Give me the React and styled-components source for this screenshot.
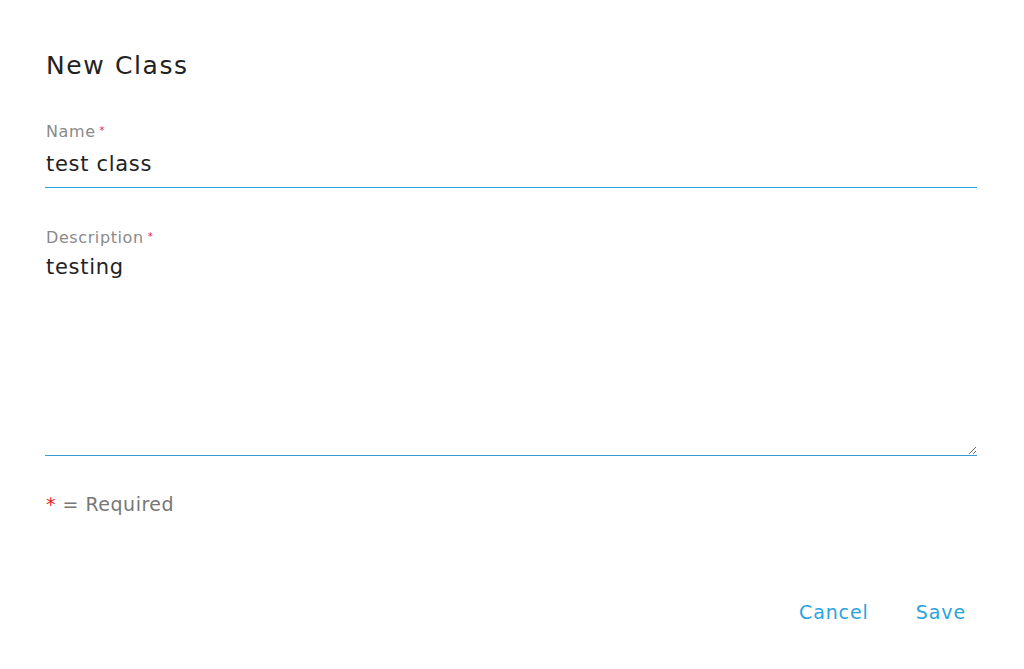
import React from 'react'
import styled, { createGlobalStyle } from 'styled-components'

const Global = createGlobalStyle`
  html, body {
    margin: 0;
    padding: 0;
    background: #ffffff;
  }
  body {
    font-family: "DejaVu Sans", "Noto Sans", sans-serif;
    color: #222222;
  }
`

const Dialog = styled.div`
  width: 1024px;
  height: 669px;
  box-sizing: border-box;
  padding: 50px 47px 0 45px;
  display: flex;
  flex-direction: column;
`

const Title = styled.h2`
  margin: 0 0 0 1px;
  font-size: 25px;
  line-height: 32px;
  font-weight: normal;
  letter-spacing: 1.6px;
  color: #222222;
`

const Field = styled.div`
  display: flex;
  flex-direction: column;
  margin-top: ${p => p.$top}px;
`

const Label = styled.label`
  font-size: 16px;
  line-height: 18px;
  color: #8a8a8a;
  padding-left: 1px;
  letter-spacing: 0.6px;
`

const Star = styled.span`
  color: #e8272b;
  font-size: 10px;
  vertical-align: 3px;
  margin-left: 4px;
`

const Line = styled.div`
  border-bottom: 1px solid ${p => (p.$focused ? '#1ea7e4' : '#3a9ad2')};
  display: flex;
  flex-direction: column;
`

const Input = styled.input`
  border: 0;
  outline: none;
  padding: 10px 0 10px 1px;
  margin: 0;
  font-family: "DejaVu Sans", sans-serif;
  font-size: 21px;
  line-height: 26px;
  color: #222222;
  letter-spacing: 0.7px;
  background: transparent;
`

const TextArea = styled.textarea`
  border: 0;
  outline: none;
  margin: 0;
  padding: 7px 0 0 1px;
  height: 208px;
  box-sizing: border-box;
  font-family: "DejaVu Sans", sans-serif;
  font-size: 21px;
  line-height: 26px;
  color: #222222;
  letter-spacing: 0.7px;
  resize: vertical;
  background: transparent;
`

const Note = styled.div`
  margin-top: 36px;
  font-size: 19px;
  line-height: 24px;
  color: #777777;
  padding-left: 1px;
  letter-spacing: 0.5px;

  span {
    color: #e8272b;
  }
`

const Actions = styled.div`
  margin-top: 84px;
  display: flex;
  justify-content: flex-end;
  gap: 47px;
  padding-right: 11px;
`

const TextButton = styled.button`
  border: none;
  background: none;
  padding: 0;
  font-family: "DejaVu Sans", sans-serif;
  font-size: 19px;
  line-height: 24px;
  letter-spacing: 0.9px;
  color: #2ba3de;
  cursor: pointer;
`

export default function App() {
  return (
    <>
      <Global />
      <Dialog>
        <Title>New Class</Title>
        <Field $top={40}>
          <Label>
            Name<Star>*</Star>
          </Label>
          <Line $focused>
            <Input defaultValue="test class" />
          </Line>
        </Field>
        <Field $top={40}>
          <Label>
            Description<Star>*</Star>
          </Label>
          <Line>
            <TextArea defaultValue="testing" />
          </Line>
        </Field>
        <Note>
          <span>*</span> = Required
        </Note>
        <Actions>
          <TextButton>Cancel</TextButton>
          <TextButton>Save</TextButton>
        </Actions>
      </Dialog>
    </>
  )
}
